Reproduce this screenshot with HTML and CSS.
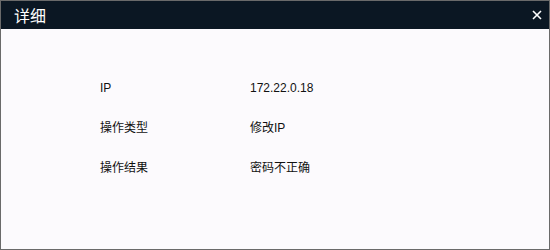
FILE: index.html
```html
<!DOCTYPE html>
<html>
<head>
<meta charset="utf-8">
<link rel="stylesheet" href="styles.css">
</head>
<body>
<div class="dialog">
  <div class="titlebar">
    <span class="title">详细</span>
    <span class="close" aria-label="关闭">
      <svg width="10" height="10" viewBox="0 0 10 10"><path d="M1 1 L9 9 M9 1 L1 9" stroke="#ffffff" stroke-width="1.6" fill="none"/></svg>
    </span>
  </div>
  <div class="content">
    <div class="grid">
      <div class="label">IP</div><div class="value">172.22.0.18</div>
      <div class="label">操作类型</div><div class="value">修改IP</div>
      <div class="label">操作结果</div><div class="value">密码不正确</div>
    </div>
  </div>
</div>
</body>
</html>
```
FILE: styles.css
```css
html, body {
  margin: 0;
  padding: 0;
  background: #fcfafd;
}
.dialog {
  width: 550px;
  height: 250px;
  box-sizing: border-box;
  border: 1px solid #6a6a6a;
  background: #fcfafd;
  display: flex;
  flex-direction: column;
  font-family: "Liberation Sans", "Noto Sans CJK SC", sans-serif;
}
.titlebar {
  height: 28px;
  background: #0b1723;
  display: flex;
  align-items: center;
  justify-content: space-between;
  padding: 0 7px 0 13px;
}
.title {
  color: #ffffff;
  font-size: 16px;
  font-family: "Noto Sans CJK SC", sans-serif;
  line-height: 28px;
}
.close {
  display: flex;
  width: 10px;
  height: 10px;
}
.content {
  padding: 39px 0 0 99px;
}
.grid {
  display: grid;
  grid-template-columns: 150px auto;
  grid-auto-rows: 40px;
  font-size: 12px;
  color: #111111;
}
.label, .value {
  line-height: 40px;
}
```
